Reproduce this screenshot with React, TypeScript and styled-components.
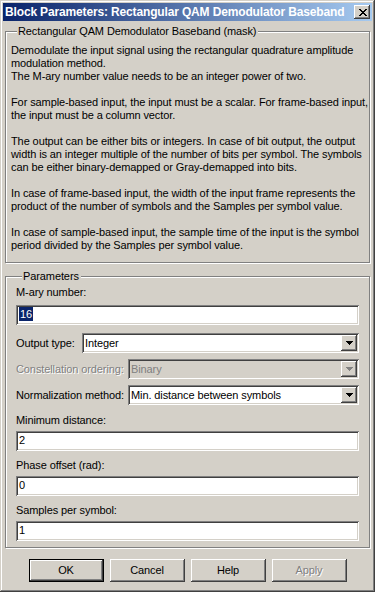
import React from "react";
import styled, { createGlobalStyle, css } from "styled-components";

const GlobalStyle = createGlobalStyle`
  html, body {
    margin: 0;
    padding: 0;
    background: #d4d0c8;
  }
  * {
    box-sizing: border-box;
  }
`

const description = [
    [
        "Demodulate the input signal using the rectangular quadrature amplitude",
        "modulation method.",
        "The M-ary number value needs to be an integer power of two.",
    ],
    [
        "For sample-based input, the input must be a scalar. For frame-based input,",
        "the input must be a column vector.",
    ],
    [
        "The output can be either bits or integers. In case of bit output, the output",
        "width is an integer multiple of the number of bits per symbol. The symbols",
        "can be either binary-demapped or Gray-demapped into bits.",
    ],
    [
        "In case of frame-based input, the width of the input frame represents the",
        "product of the number of symbols and the Samples per symbol value.",
    ],
    [
        "In case of sample-based input, the sample time of the input is the symbol",
        "period divided by the Samples per symbol value.",
    ],
]

const ArrowIcon = ({disabled}: { disabled?: boolean }) => (
    <svg width="7" height="4" viewBox="0 0 7 4" shapeRendering="crispEdges">
        <polygon points="0,0 7,0 3.5,4" fill={disabled ? '#808080' : '#000'}/>
    </svg>
)

const CloseIcon = () => (
    <svg width="8" height="7" viewBox="0 0 8 7" shapeRendering="crispEdges">
        <path d="M0 0h2v1h1v1h2v-1h1v-1h2v1h-1v1h-1v1h-1v1h1v1h1v1h1v1h-2v-1h-1v-1h-2v1h-1v1h-2v-1h1v-1h1v-1h1v-1h-1v-1h-1v-1h-1z" fill="#000"/>
    </svg>
)

type ComboProps = {
    value: string
    disabled?: boolean
}

const Combo = (props: ComboProps) => (
    <ComboBox disabled={props.disabled}>
        <ComboText disabled={props.disabled}>{props.value}</ComboText>
        <DropButton>
            <ArrowIcon disabled={props.disabled}/>
        </DropButton>
    </ComboBox>
)

export default function App() {
    return (
        <>
            <GlobalStyle/>
            <Window>
                <TitleBar>
                    <Title>Block Parameters: Rectangular QAM Demodulator Baseband</Title>
                    <CloseButton>
                        <CloseIcon/>
                    </CloseButton>
                </TitleBar>
                <Body>
                    <GroupBox>
                        <Legend>Rectangular QAM Demodulator Baseband (mask)</Legend>
                        {description.map((para, i) => (
                            <Paragraph key={i}>
                                {para.map((line, j) => (
                                    <Line key={j}>{line}</Line>
                                ))}
                            </Paragraph>
                        ))}
                    </GroupBox>

                    <ParamsBox>
                        <Legend>Parameters</Legend>
                        <Label>M-ary number:</Label>
                        <TextField gap={6}>
                            <Selected>16</Selected>
                        </TextField>

                        <ComboRow>
                            <Label width={62}>Output type:</Label>
                            <Combo value="Integer"/>
                        </ComboRow>
                        <ComboRow>
                            <Label width={108} disabled>Constellation ordering:</Label>
                            <Combo value="Binary" disabled/>
                        </ComboRow>
                        <ComboRow last>
                            <Label width={108}>Normalization method:</Label>
                            <Combo value="Min. distance between symbols"/>
                        </ComboRow>

                        <Label>Minimum distance:</Label>
                        <TextField>2</TextField>
                        <Label>Phase offset (rad):</Label>
                        <TextField>0</TextField>
                        <Label>Samples per symbol:</Label>
                        <TextField last>1</TextField>
                    </ParamsBox>

                    <ButtonRow>
                        <Button isDefault>OK</Button>
                        <Button>Cancel</Button>
                        <Button>Help</Button>
                        <Button disabled>Apply</Button>
                    </ButtonRow>
                </Body>
            </Window>
        </>
    )
}

const raised = css`
  background: #d4d0c8;
  box-shadow: inset -1px -1px 0 #404040, inset 1px 1px 0 #ffffff,
  inset -2px -2px 0 #808080, inset 2px 2px 0 #d4d0c8;
`

const sunken = css`
  box-shadow: inset 1px 1px 0 #808080, inset -1px -1px 0 #ffffff,
  inset 2px 2px 0 #404040, inset -2px -2px 0 #d4d0c8;
`

const Window = styled.div`
  width: 375px;
  height: 592px;
  padding: 3px;
  background: #d4d0c8;
  box-shadow: inset -1px -1px 0 #404040, inset 1px 1px 0 #d4d0c8,
  inset -2px -2px 0 #808080, inset 2px 2px 0 #ffffff;
  font-family: "Liberation Sans", Arial, sans-serif;
  font-size: 11px;
  line-height: 13px;
  letter-spacing: -0.1px;
  color: #000;
`

const TitleBar = styled.div`
  height: 18px;
  display: flex;
  align-items: center;
  justify-content: space-between;
  padding: 0 2px 0 2px;
  background: linear-gradient(to right, #0a246a, #a6caf0);
`

const Title = styled.span`
  color: #fff;
  font-weight: bold;
  font-size: 12px;
  letter-spacing: -0.15px;
  white-space: nowrap;
`

const CloseButton = styled.div`
  ${raised};
  flex: 0 0 auto;
  width: 16px;
  height: 14px;
  display: flex;
  align-items: center;
  justify-content: center;
  padding-left: 1px;
`

const Body = styled.div`
  padding: 4px 2px 0 2px;
`

const GroupBox = styled.fieldset`
  margin: 0;
  padding: 6px 5px 10px 5px;
  border: 1px solid #808080;
  box-shadow: inset 1px 1px 0 #fff, 1px 1px 0 #fff;
  min-width: 0;
`

const ParamsBox = styled(GroupBox)`
  margin-top: 7px;
  padding: 3px 10px 6px 10px;
`

const Legend = styled.legend`
  margin-left: 6px;
  padding: 0 2px 0 1px;
  background: #d4d0c8;
  line-height: 13px;
`

const Paragraph = styled.p`
  margin: 0 0 13px 0;

  &:last-of-type {
    margin-bottom: 0;
  }
`

const Line = styled.span`
  display: block;
  white-space: nowrap;
`

const Label = styled.div<{ width?: number, disabled?: boolean }>`
  flex: 0 0 auto;
  width: ${p => p.width ? `${p.width}px` : 'auto'};
  white-space: nowrap;
  color: ${p => p.disabled ? '#808080' : '#000'};
  text-shadow: ${p => p.disabled ? '1px 1px 0 #fff' : 'none'};
`

const TextField = styled.div<{ gap?: number, last?: boolean }>`
  ${sunken};
  background: #fff;
  height: 20px;
  margin-top: ${p => p.gap ?? 4}px;
  margin-bottom: ${p => p.last ? 0 : 8}px;
  padding: 3px 3px 0 3px;
  white-space: nowrap;
`

const Selected = styled.span`
  display: inline-block;
  padding: 0 1px;
  margin-top: -1px;
  line-height: 14px;
  background: #0a246a;
  color: #fff;
`

const ComboRow = styled.div<{ last?: boolean }>`
  display: flex;
  align-items: center;
  gap: 4px;
  margin-top: 6px;
  margin-bottom: ${p => p.last ? 9 : 0}px;
`

const ComboBox = styled.div<{ disabled?: boolean }>`
  ${sunken};
  flex: 1;
  height: 20px;
  display: flex;
  align-items: center;
  justify-content: space-between;
  padding: 2px;
  background: ${p => p.disabled ? '#d4d0c8' : '#fff'};
`

const ComboText = styled.span<{ disabled?: boolean }>`
  padding-left: 1px;
  color: ${p => p.disabled ? '#808080' : '#000'};
  white-space: nowrap;
`

const DropButton = styled.div`
  ${raised};
  width: 16px;
  height: 16px;
  display: flex;
  align-items: center;
  justify-content: center;
`

const ButtonRow = styled.div`
  display: flex;
  justify-content: center;
  gap: 6px;
  margin-top: 11px;
`

const Button = styled.div<{ isDefault?: boolean, disabled?: boolean }>`
  ${raised};
  width: 75px;
  height: 23px;
  display: flex;
  align-items: center;
  justify-content: center;
  color: ${p => p.disabled ? '#808080' : '#000'};
  text-shadow: ${p => p.disabled ? '1px 1px 0 #fff' : 'none'};
  ${p => p.isDefault && css`
    border: 1px solid #000;
  `}
`
